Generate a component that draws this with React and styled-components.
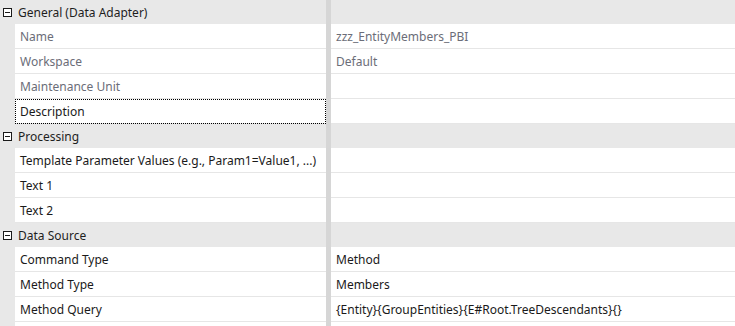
import React from "react";
import styled, { createGlobalStyle } from "styled-components";

const GlobalStyle = createGlobalStyle`
  body {
    margin: 0;
    background: #ffffff;
    font-family: "Noto Sans", "Open Sans", sans-serif;
    font-size: 12px;
  }
`;

const sections = [
  {
    title: "General (Data Adapter)",
    rows: [
      { label: "Name", value: "zzz_EntityMembers_PBI", readOnly: true },
      { label: "Workspace", value: "Default", readOnly: true },
      { label: "Maintenance Unit", value: "", readOnly: true },
      { label: "Description", value: "", focused: true },
    ],
  },
  {
    title: "Processing",
    rows: [
      { label: "Template Parameter Values (e.g., Param1=Value1, ...)", value: "" },
      { label: "Text 1", value: "" },
      { label: "Text 2", value: "" },
    ],
  },
  {
    title: "Data Source",
    rows: [
      { label: "Command Type", value: "Method" },
      { label: "Method Type", value: "Members" },
      { label: "Method Query", value: "{Entity}{GroupEntities}{E#Root.TreeDescendants}{}" },
      { label: "", value: "" },
    ],
  },
];

const CollapseIcon = () => (
  <svg width="9" height="9" viewBox="0 0 9 9">
    <rect x="0.5" y="0.5" width="8" height="8" fill="#fff" stroke="#1a1a1a" />
    <line x1="2" y1="4.5" x2="7" y2="4.5" stroke="#1a1a1a" />
  </svg>
);

const PropertyGrid = () => (
  <Grid>
    {sections.map((s) => (
      <Section key={s.title}>
        <Header>
          <Toggle>
            <CollapseIcon />
          </Toggle>
          <HeaderTitle>{s.title}</HeaderTitle>
          <Splitter />
          <HeaderFill />
        </Header>
        {s.rows.map((r, i) => (
          <Row key={i}>
            <Gutter />
            <Label $readOnly={r.readOnly} $focused={r.focused}>
              {r.label}
            </Label>
            <Splitter />
            <Value $readOnly={r.readOnly}>{r.value}</Value>
          </Row>
        ))}
      </Section>
    ))}
  </Grid>
);

const Grid = styled.div`
  width: 735px;
  height: 326px;
  overflow: hidden;
  background: #e8e8e8;
`;

const Section = styled.div`
  display: flex;
  flex-direction: column;
`;

const Header = styled.div`
  display: grid;
  grid-template-columns: 15px 311px 5px 1fr;
  height: 24px;
  background: #e8e8e8;
  color: #1e1e1e;
`;

const Toggle = styled.div`
  display: flex;
  align-items: center;
  padding-left: 3px;
  padding-top: 1px;
`;

const HeaderTitle = styled.div`
  display: flex;
  align-items: center;
  padding-left: 3px;
  white-space: nowrap;
`;

const HeaderFill = styled.div``;

const Splitter = styled.div`
  background: #d6d6d6;
`;

const Row = styled.div`
  display: grid;
  grid-template-columns: 15px 311px 5px 1fr;
  height: 25px;
`;

const Gutter = styled.div`
  background: #e8e8e8;
`;

const Cell = styled.div`
  display: flex;
  align-items: center;
  background: #ffffff;
  border-bottom: 1px solid #e6e6e6;
  padding-left: 5px;
  white-space: nowrap;
  overflow: hidden;
  color: ${(p) => (p.$readOnly ? "#6b6d78" : "#1a1a1a")};
`;

const Label = styled(Cell)`
  outline: ${(p) => (p.$focused ? "1px dotted #000" : "none")};
  outline-offset: -1px;
`;

const Value = styled(Cell)``;

export default function App() {
  return (
    <>
      <GlobalStyle />
      <PropertyGrid />
    </>
  );
}
